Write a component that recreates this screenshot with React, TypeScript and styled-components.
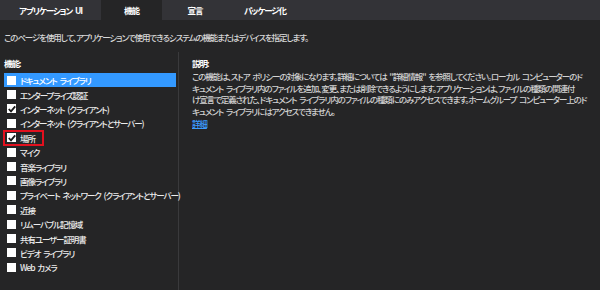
import styled, { createGlobalStyle } from "styled-components";

const GlobalStyle = createGlobalStyle`
    body {
        margin: 0;
        background-color: #252526;
        font-family: "Noto Sans CJK JP", "Noto Sans", sans-serif;
        font-feature-settings: "palt";
        font-weight: 500;
        color: #d8d8d8;
        font-size: 8.5px;
        letter-spacing: -1.1px;
        word-spacing: 2px;
    }
`;

const Wrapper = styled.div`
    width: 600px;
    height: 290px;
    overflow: hidden;
    display: flex;
    flex-direction: column;
`;

const TabBar = styled.div`
    height: 20px;
    display: flex;
    background-color: #333337;
`;

const Tab = styled.div<{ $width: number; $active?: boolean }>`
    width: ${(props) => props.$width}px;
    display: flex;
    align-items: center;
    justify-content: center;
    font-weight: bold;
    color: #ffffff;
    background-color: ${(props) => (props.$active ? "#252526" : "transparent")};
`;

const Intro = styled.p`
    margin: 0;
    padding: 11px 4px 0;
    line-height: 12px;
    white-space: nowrap;
`;

const Main = styled.div`
    flex: 1;
    display: flex;
    margin-top: 9px;
`;

const LeftPane = styled.div`
    width: 179px;
    border-right: 1px solid #3a3a3c;
    padding-left: 4px;
    box-sizing: border-box;
`;

const Label = styled.div`
    padding-top: 5px;
    line-height: 12px;
    font-weight: bold;
    color: #ffffff;
`;

const List = styled.ul`
    list-style: none;
    margin: 0;
    padding: 4px 0 0;
    width: 172px;
`;

const Item = styled.li<{ $selected?: boolean }>`
    height: 14.4px;
    display: flex;
    align-items: center;
    padding-left: 1px;
    background-color: ${(props) => (props.$selected ? "#3399ff" : "transparent")};
    color: ${(props) => (props.$selected ? "#ffffff" : "#ececec")};
    white-space: nowrap;
`;

const ItemInner = styled.span<{ $marked?: boolean }>`
    display: flex;
    align-items: center;
    gap: 4px;
    height: 16px;
    box-sizing: border-box;
    padding: 0 ${(props) => (props.$marked ? 7 : 2)}px 0 2px;
    margin-left: -2px;
    border: 2px solid ${(props) => (props.$marked ? "#e3101e" : "transparent")};
`;

const Box = styled.span`
    width: 9px;
    height: 9px;
    background-color: #ffffff;
    display: flex;
    align-items: center;
    justify-content: center;
    flex-shrink: 0;
`;

const RightPane = styled.div`
    flex: 1;
    padding-left: 13px;
`;

const Desc = styled.p`
    margin: 2px 0 0;
    line-height: 11.7px;
    white-space: nowrap;
    color: #d2d2d2;
`;

const MoreLink = styled.a`
    display: block;
    line-height: 11px;
    color: #3c9cff;
    text-decoration: underline;
`;

const tabs = [
    { label: "アプリケーション UI", width: 101 },
    { label: "機能", width: 61, active: true },
    { label: "宣言", width: 66 },
    { label: "パッケージ化", width: 74 },
];

const capabilities = [
    { name: "ドキュメント ライブラリ", selected: true },
    { name: "エンタープライズ認証" },
    { name: "インターネット (クライアント)", checked: true },
    { name: "インターネット (クライアントとサーバー)" },
    { name: "場所", checked: true, marked: true },
    { name: "マイク" },
    { name: "音楽ライブラリ" },
    { name: "画像ライブラリ" },
    { name: "プライベート ネットワーク (クライアントとサーバー)" },
    { name: "近接" },
    { name: "リムーバブル記憶域" },
    { name: "共有ユーザー証明書" },
    { name: "ビデオ ライブラリ" },
    { name: "Web カメラ" },
];

const descLines = [
    "この機能は、ストア ポリシーの対象になります。詳細については \"詳細情報\" を参照してください。ローカル コンピューターのド",
    "キュメント ライブラリ内のファイルを追加、変更、または削除できるようにします。アプリケーションは、ファイルの種類の関連付",
    "け宣言で定義された、ドキュメント ライブラリ内のファイルの種類にのみアクセスできます。ホームグループ コンピューター上のド",
    "キュメント ライブラリにはアクセスできません。",
];

function Check() {
    return (
        <svg width="8" height="8" viewBox="0 0 8 8">
            <path d="M0.8 4 L3 6.4 L7.2 1.4" fill="none" stroke="#1a1a1a" strokeWidth="1.8" />
        </svg>
    );
}

function App() {
    return (
        <Wrapper>
            <GlobalStyle />
            <TabBar>
                {tabs.map((tab) => (
                    <Tab key={tab.label} $width={tab.width} $active={tab.active}>
                        {tab.label}
                    </Tab>
                ))}
            </TabBar>
            <Intro>このページを使用して、アプリケーションで使用できるシステムの機能またはデバイスを指定します。</Intro>
            <Main>
                <LeftPane>
                    <Label>機能:</Label>
                    <List>
                        {capabilities.map((cap) => (
                            <Item key={cap.name} $selected={cap.selected}>
                                <ItemInner $marked={cap.marked}>
                                    <Box>{cap.checked && <Check />}</Box>
                                    {cap.name}
                                </ItemInner>
                            </Item>
                        ))}
                    </List>
                </LeftPane>
                <RightPane>
                    <Label>説明:</Label>
                    <Desc>
                        {descLines.map((line, i) => (
                            <span key={i}>
                                {line}
                                {i < descLines.length - 1 && <br />}
                            </span>
                        ))}
                    </Desc>
                    <MoreLink href="#">詳細</MoreLink>
                </RightPane>
            </Main>
        </Wrapper>
    );
}

export default App;
